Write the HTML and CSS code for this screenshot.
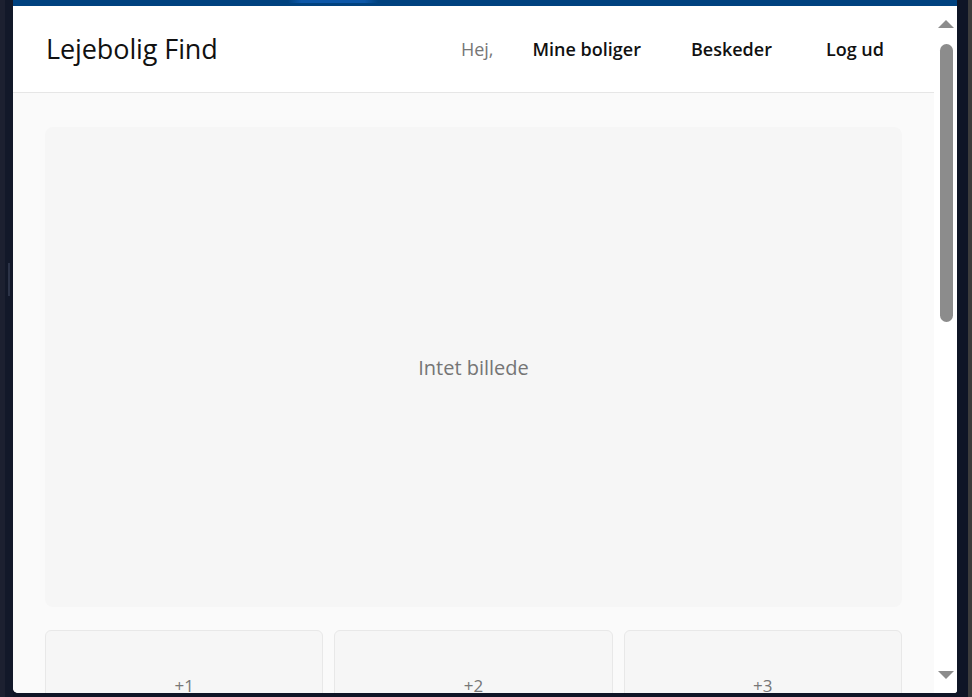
FILE: index.html
```html
<!DOCTYPE html>
<html lang="da">
<head>
<meta charset="utf-8">
<title>Lejebolig Find</title>
<link rel="stylesheet" href="styles.css">
</head>
<body>
<div class="edge-left"><span class="grip"></span></div>
<div class="window">
  <div class="titlebar"><span class="glow"></span></div>
  <div class="frame">
    <div class="page">
      <header class="topbar">
        <div class="brand">Lejebolig Find</div>
        <nav class="nav">
          <span class="greet">Hej,</span>
          <a class="nav-link" href="#">Mine boliger</a>
          <a class="nav-link" href="#">Beskeder</a>
          <a class="nav-link" href="#">Log ud</a>
        </nav>
      </header>
      <main class="main">
        <div class="hero">Intet billede</div>
        <div class="thumbs">
          <div class="thumb">+1</div>
          <div class="thumb">+2</div>
          <div class="thumb">+3</div>
        </div>
      </main>
    </div>
    <div class="scrollbar">
      <span class="arrow up"></span>
      <div class="track"><span class="thumbbar"></span></div>
      <span class="arrow down"></span>
    </div>
  </div>
</div>
<div class="edge-right"></div>
</body>
</html>
```

FILE: styles.css
```css
* { box-sizing: border-box; }
html, body { margin: 0; padding: 0; }
body {
  display: flex;
  width: 972px;
  height: 697px;
  overflow: hidden;
  background: #0f1526;
  font-family: "Open Sans", "Noto Sans", sans-serif;
}
.edge-left {
  width: 13px;
  flex: none;
  background: linear-gradient(to right, #1c2030 0 5px, #121829 5px);
  display: flex;
  align-items: flex-start;
  justify-content: center;
  padding-top: 263px;
}
.grip {
  display: block;
  width: 2px;
  height: 33px;
  margin-left: 4px;
  background: #2c3347;
}
.window {
  width: 944px;
  height: 693px;
  flex: none;
  display: flex;
  flex-direction: column;
  border-bottom-left-radius: 5px;
  border-bottom-right-radius: 3px;
  overflow: hidden;
  background: #fff;
}
.titlebar {
  height: 6px;
  flex: none;
  background: #00427f;
  display: flex;
}
.glow {
  display: block;
  width: 90px;
  margin-left: 275px;
  height: 3px;
  background: linear-gradient(to right, rgba(20,100,190,0), #0c57a8 15%, #0c57a8 85%, rgba(20,100,190,0));
}
.frame {
  flex: 1;
  display: flex;
  min-height: 0;
}
.page {
  width: 921px;
  flex: none;
  display: flex;
  flex-direction: column;
  background: #fafafa;
  overflow: hidden;
}
.topbar {
  height: 87px;
  flex: none;
  background: #fff;
  border-bottom: 1px solid #e6e6e6;
  display: flex;
  align-items: center;
  justify-content: space-between;
  padding: 0 50px 0 33px;
}
.brand {
  font-size: 27px;
  font-weight: 500;
  color: #111;
  letter-spacing: -0.1px;
  margin-top: -1px;
}
.nav {
  display: flex;
  align-items: center;
  font-size: 18px;
}
.greet {
  color: #777;
  margin-right: 39px;
}
.nav-link {
  color: #111;
  font-weight: 600;
  text-decoration: none;
  margin-left: 54px;
}
.greet + .nav-link { margin-left: 0; }
.greet + .nav-link + .nav-link { margin-left: 50px; }
.main {
  padding: 34px 32px 0;
  display: flex;
  flex-direction: column;
  gap: 23px;
}
.hero {
  height: 480px;
  background: #f6f6f6;
  border-radius: 8px;
  display: flex;
  align-items: center;
  justify-content: center;
  color: #757575;
  font-size: 20px;
}
.thumbs {
  display: grid;
  grid-template-columns: repeat(3, 1fr);
  gap: 11px;
}
.thumb {
  height: 110px;
  background: #f6f6f6;
  border: 1px solid #e8e8e8;
  border-radius: 6px;
  display: flex;
  align-items: center;
  justify-content: center;
  color: #777;
  font-size: 17px;
  padding-top: 1px;
}
.scrollbar {
  width: 23px;
  flex: none;
  background: #fff;
  display: flex;
  flex-direction: column;
  align-items: center;
  padding: 14px 0 14px 1px;
}
.arrow {
  display: block;
  width: 0;
  height: 0;
  border-left: 8px solid transparent;
  border-right: 8px solid transparent;
}
.arrow.up { border-bottom: 8px solid #8c8c8c; }
.arrow.down { border-top: 8px solid #8c8c8c; }
.track {
  flex: 1;
  width: 100%;
  display: flex;
  justify-content: center;
  padding-top: 16px;
}
.thumbbar {
  display: block;
  width: 13px;
  height: 278px;
  border-radius: 7px;
  background: #8c8c8c;
}
.edge-right {
  width: 15px;
  flex: none;
  height: 697px;
  background: linear-gradient(to right, #0f1526 0 11px, #3c3c3c 11px);
}
```
